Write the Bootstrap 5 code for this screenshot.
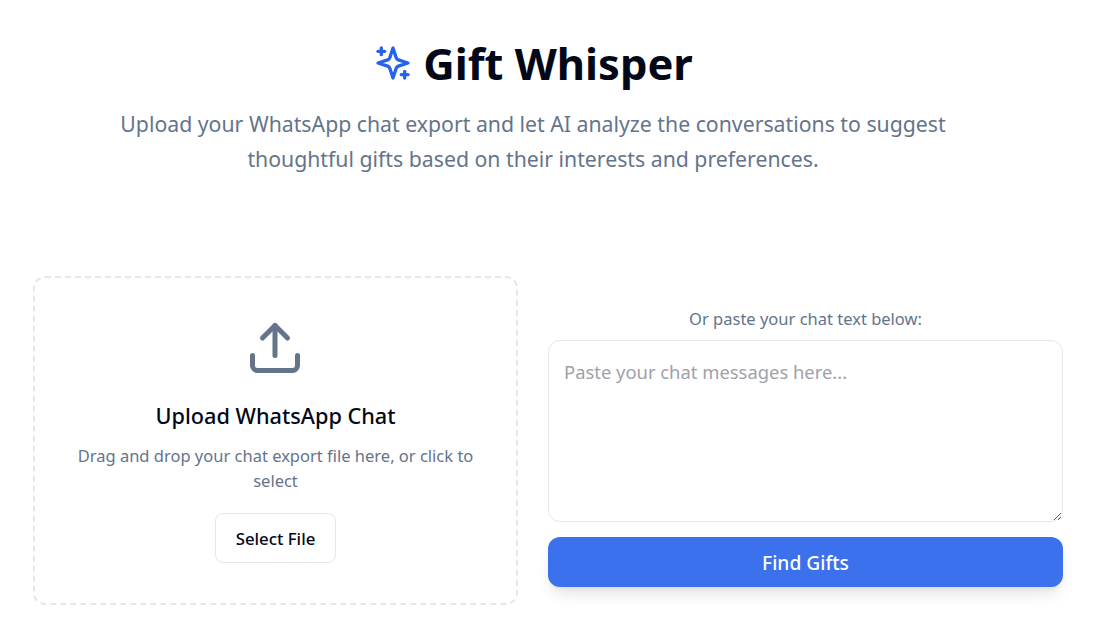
<!DOCTYPE html>
<html lang="en">
<head>
  <meta charset="UTF-8" />
  <title>Gift Whisper</title>
  <link href="https://cdn.jsdelivr.net/npm/bootstrap@5.3.3/dist/css/bootstrap.min.css" rel="stylesheet"/>
  <style>
    html, body { height: 100%; overflow: hidden; }
    body { font-family: "Noto Sans", sans-serif; color: #020817; background: #fff; }
    .page-head { width: 1101px; padding: 33px 33px 0; }
    .head-inner { width: 1000px; }
    .app-title { font-size: 43.5px; line-height: 60px; font-weight: 700; margin: 0; gap: 10px; }
    .app-sub { font-size: 21.25px; line-height: 35px; color: #64748b; width: 896px; margin: 13px auto 0; }
    .main-grid { padding: 0 38px 0 33px; margin-top: 100px; gap: 30px; }
    .drop-box { width: 485px; height: 329px; border: 2px dashed #e2e8f0; border-radius: 12px; padding: 40px 32px 0; }
    .drop-icon { display: block; margin: 0 0 0 178px; }
    .drop-title { font-size: 21.7px; line-height: 28px; font-weight: 500; margin: 24px 0 13px; }
    .drop-text { font-size: 16.5px; line-height: 25px; color: #64748b; margin: 0 0 20px; }
    .pick-btn { font-size: 16.8px; font-weight: 500; border: 1px solid #e2e8f0; border-radius: 8px; padding: 2px 0 0; width: 121px; height: 50px; color: #020817; background: #fff; }
    .paste-col { width: 515px; padding-top: 31px; }
    .paste-label { font-size: 16.5px; line-height: 24px; color: #64748b; margin-bottom: 9px; }
    .paste-area { height: 182px; border: 1px solid #e2e8f0; border-radius: 12px; padding: 17px 15px; font-size: 18.4px; line-height: 28px; color: #020817; }
    .paste-area::placeholder { color: #a1a1aa; }
    .find-btn { margin-top: 15px; height: 50px; padding-top: 8px; border-radius: 12px; background: #3b71ed; border: 0; color: #fff; font-size: 19.2px; font-weight: 500; box-shadow: 0 10px 15px -3px rgba(0,0,0,.1), 0 4px 6px -4px rgba(0,0,0,.1); }
  </style>
</head>
<body>
  <div class="page-head text-center">
    <div class="head-inner">
      <h1 class="app-title d-flex justify-content-center align-items-center">
        <svg width="40" height="40" viewBox="0 0 24 24" fill="none" stroke="#2563eb" stroke-width="2" stroke-linecap="round" stroke-linejoin="round"><path d="m12 3-1.912 5.813a2 2 0 0 1-1.275 1.275L3 12l5.813 1.912a2 2 0 0 1 1.275 1.275L12 21l1.912-5.813a2 2 0 0 1 1.275-1.275L21 12l-5.813-1.912a2 2 0 0 1-1.275-1.275L12 3Z"/><path d="M5 3v4"/><path d="M19 17v4"/><path d="M3 5h4"/><path d="M17 19h4"/></svg>
        <span>Gift Whisper</span>
      </h1>
      <p class="app-sub">Upload your WhatsApp chat export and let AI analyze the conversations to suggest thoughtful gifts based on their interests and preferences.</p>
    </div>
  </div>
  <div class="main-grid d-flex align-items-start">
    <div class="drop-box text-center">
      <svg class="drop-icon" width="60" height="60" viewBox="0 0 24 24" fill="none" stroke="#64748b" stroke-width="2" stroke-linecap="round" stroke-linejoin="round"><path d="M21 15v4a2 2 0 0 1-2 2H5a2 2 0 0 1-2-2v-4"/><polyline points="17 8 12 3 7 8"/><line x1="12" x2="12" y1="3" y2="15"/></svg>
      <h3 class="drop-title">Upload WhatsApp Chat</h3>
      <p class="drop-text">Drag and drop your chat export file here, or click to select</p>
      <button type="button" class="btn pick-btn">Select File</button>
    </div>
    <div class="paste-col d-flex flex-column">
      <div class="paste-label text-center">Or paste your chat text below:</div>
      <textarea class="form-control paste-area" placeholder="Paste your chat messages here..."></textarea>
      <button type="button" class="btn find-btn w-100">Find Gifts</button>
    </div>
  </div>
  <script src="https://cdn.jsdelivr.net/npm/bootstrap@5.3.3/dist/js/bootstrap.bundle.min.js"></script>
</body>
</html>
